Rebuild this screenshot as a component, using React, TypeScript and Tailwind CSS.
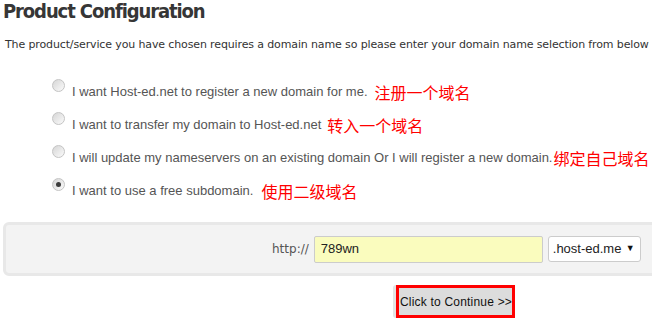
import React from 'react';

const options = [
  { label: 'I want Host-ed.net to register a new domain for me.', cn: '注册一个域名', gap: 'ml-[7px]', checked: false },
  { label: 'I want to transfer my domain to Host-ed.net', cn: '转入一个域名', gap: 'ml-[6px]', checked: false },
  { label: 'I will update my nameservers on an existing domain Or I will register a new domain.', cn: '绑定自己域名', gap: 'ml-[1px]', checked: false },
  { label: 'I want to use a free subdomain.', cn: '使用二级域名', gap: 'ml-[8px]', checked: true },
];

function Radio({ checked }: { checked: boolean }) {
  return (
    <span className="flex items-center justify-center w-[13px] h-[13px] rounded-full border border-[#c4c4c4] bg-gradient-to-br from-[#d6d6d6] to-[#fbfbfb] shrink-0 mb-[12px]">
      {checked && <span className="w-[5px] h-[5px] rounded-full bg-[#3c3c3c]" />}
    </span>
  );
}

export default function App() {
  return (
    <div className="w-[652px] h-[321px] overflow-hidden bg-white font-['Liberation_Sans',sans-serif]">
      <h1 className="pl-[3px] text-[20px] leading-[22px] font-bold text-[#363636] font-['DejaVu_Sans_Condensed','DejaVu_Sans',sans-serif] font-stretch-condensed tracking-[-1.1px] whitespace-nowrap">
        Product Configuration
      </h1>
      <p className="mt-[15px] pl-[5px] text-[11px] leading-[16px] text-[#333] font-['DejaVu_Sans',sans-serif] tracking-[-0.13px] whitespace-nowrap">
        The product/service you have chosen requires a domain name so please enter your domain name selection from below
      </p>

      <div className="mt-[22px] pl-[52px] flex flex-col">
        {options.map((o) => (
          <div key={o.cn} className="flex items-center h-[33px] whitespace-nowrap">
            <Radio checked={o.checked} />
            <span className="ml-[7px] text-[13px] text-[#555]">{o.label}</span>
            <span className={`${o.gap} text-[16px] text-[#f00] font-['Noto_Sans_CJK_SC',sans-serif]`}>{o.cn}</span>
          </div>
        ))}
      </div>

      <div className="mt-[15px] ml-[3px] w-[680px] h-[54px] rounded-[6px] border-[3px] border-[#e8e8e8] bg-[#f3f3f3] flex items-center pl-[266px] whitespace-nowrap">
        <span className="text-[12px] text-[#555] font-['DejaVu_Sans',sans-serif]">http://</span>
        <div className="ml-[5px] w-[229px] h-[27px] flex items-center pl-[6px] border border-[#ccc] rounded-[2px] bg-[#fafcbe] text-[13px] text-[#222]">
          789wn
        </div>
        <div className="ml-[5px] w-[93px] h-[26px] flex items-center justify-between pl-[4px] pr-[5px] border border-[#ccc] rounded-[3px] bg-white text-[13px] text-[#222]">
          <span>.host-ed.me</span>
          <span className="text-[9px] text-[#111]">▼</span>
        </div>
      </div>

      <div className="mt-[9px] pl-[393px]">
        <div className="inline-flex bg-[#e3e3e3] pl-[3px] rounded-l-[3px]">
          <button className="h-[33px] w-[119px] border-[3px] border-[#f00] bg-[#dcdcdc] text-[12px] text-[#111] flex items-center pl-[1px] tracking-[0.2px] whitespace-nowrap">
            Click to Continue &gt;&gt;
          </button>
        </div>
      </div>
    </div>
  );
}
